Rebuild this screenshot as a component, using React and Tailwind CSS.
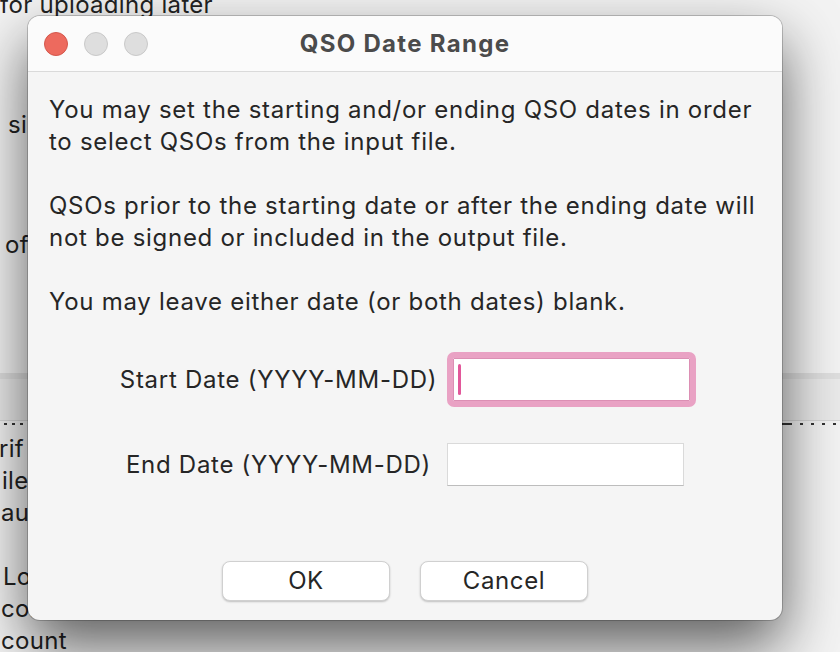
import React from 'react';

const TrafficLights = () => (
  <div className="flex items-center gap-[16px] pl-[16px]">
    <span className="block w-[24px] h-[24px] rounded-full bg-[#ed6a5e] border border-[#d4574c]" />
    <span className="block w-[24px] h-[24px] rounded-full bg-[#dedede] border border-[#c9c9c9]" />
    <span className="block w-[24px] h-[24px] rounded-full bg-[#dedede] border border-[#c9c9c9]" />
  </div>
);

const DateRow = ({ label, focused }) => (
  <div className="flex items-center justify-center gap-[16px]">
    <span className="whitespace-nowrap">{label}</span>
    {focused ? (
      <div className="w-[237px] h-[43px] bg-white border border-[#dc8fb4] rounded-[1px] outline outline-[6px] outline-[#e9a2c4] flex items-center pl-[4px]">
        <span className="block w-[3px] h-[31px] rounded-full bg-[#e2579a]" />
      </div>
    ) : (
      <div className="w-[237px] h-[43px] bg-white border border-[#dadada] border-b-[#bdbdbd]" />
    )}
  </div>
);

const DialogButton = ({ children }) => (
  <button className="w-[168px] h-[40px] rounded-[8px] bg-white text-[24px] tracking-[0.6px] text-[#262626] border-[0.5px] border-[#d0d0d0] shadow-[0_1px_2px_rgba(0,0,0,0.22)]">
    {children}
  </button>
);

const QsoDateRangeDialog = () => (
  <div className="absolute left-[28px] top-[16px] w-[754px] h-[604px] rounded-[12px] bg-[#f5f5f5] overflow-hidden flex flex-col shadow-[0_0_0_1px_rgba(0,0,0,0.2),0_26px_60px_rgba(0,0,0,0.62)]">
    {/* title bar */}
    <div className="h-[56px] shrink-0 bg-[#fbfbfb] border-b border-[#dadada] grid grid-cols-[1fr_auto_1fr] items-center">
      <TrafficLights />
      <div className="text-[24px] font-bold text-[#4b4b4b] tracking-[1.3px]">QSO Date Range</div>
      <div />
    </div>

    <div className="flex-1 flex flex-col pt-[22px] text-[24px] tracking-[0.72px] leading-[32px] text-[#262626]">
      <div className="pl-[21px] whitespace-nowrap">
        <p>
          You may set the starting and/or ending QSO dates in order<br />
          to select QSOs from the input file.
        </p>
        <p className="mt-[32px]">
          QSOs prior to the starting date or after the ending date will<br />
          not be signed or included in the output file.
        </p>
        <p className="mt-[32px]">You may leave either date (or both dates) blank.</p>
      </div>

      <div className="mt-[40px] flex flex-col gap-[42px]">
        <DateRow label="Start Date (YYYY-MM-DD)" focused />
        <DateRow label="End Date (YYYY-MM-DD)" />
      </div>

      <div className="mt-[75px] flex justify-center gap-[30px]">
        <DialogButton>OK</DialogButton>
        <DialogButton>Cancel</DialogButton>
      </div>
    </div>
  </div>
);

const Dot = ({ w = 'w-[3px]' }) => <span className={`block ${w} h-[2px] bg-[#333]`} />;

export default function App() {
  return (
    <div className="relative w-[840px] h-[652px] overflow-hidden bg-[#f3f3f3] font-['Inter','Noto_Sans',sans-serif] text-[24px] tracking-[0.3px] text-[#222]">
      {/* window behind the dialog */}
      <div className="flex flex-col leading-[30px] mt-[-10px]">
        <div>for uploading later</div>
        <div className="h-[90px]" />
        <div className="pl-[8px]">si</div>
        <div className="h-[90px]" />
        <div className="pl-[5px]">of</div>
        <div className="h-[113px]" />
      </div>
      <div className="h-[6px] bg-[#dfdfdf]" />
      <div className="h-[42px] bg-[#eaeaea] border-b border-[#d6d6d6]" />
      <div className="flex justify-between pt-[1px]">
        <div className="flex items-center gap-[5px] h-[3px] pl-[4px]">
          <Dot />
          <Dot />
          <Dot />
        </div>
        <div className="flex items-center gap-[8px] h-[3px] pr-[4px]">
          <Dot />
          <Dot w="w-[10px]" />
          <Dot />
          <Dot />
          <Dot />
          <Dot />
        </div>
      </div>
      <div className="flex flex-col leading-[32px] mt-[8px]">
        <div className="ml-[-1px]">rif</div>
        <div className="ml-[2px]">ile</div>
        <div className="ml-[1px]">au</div>
        <div className="h-[32px]" />
        <div className="ml-[3px]">Lo</div>
        <div className="ml-[1px]">com</div>
        <div className="ml-[1px]">count</div>
      </div>

      <QsoDateRangeDialog />
    </div>
  );
}
